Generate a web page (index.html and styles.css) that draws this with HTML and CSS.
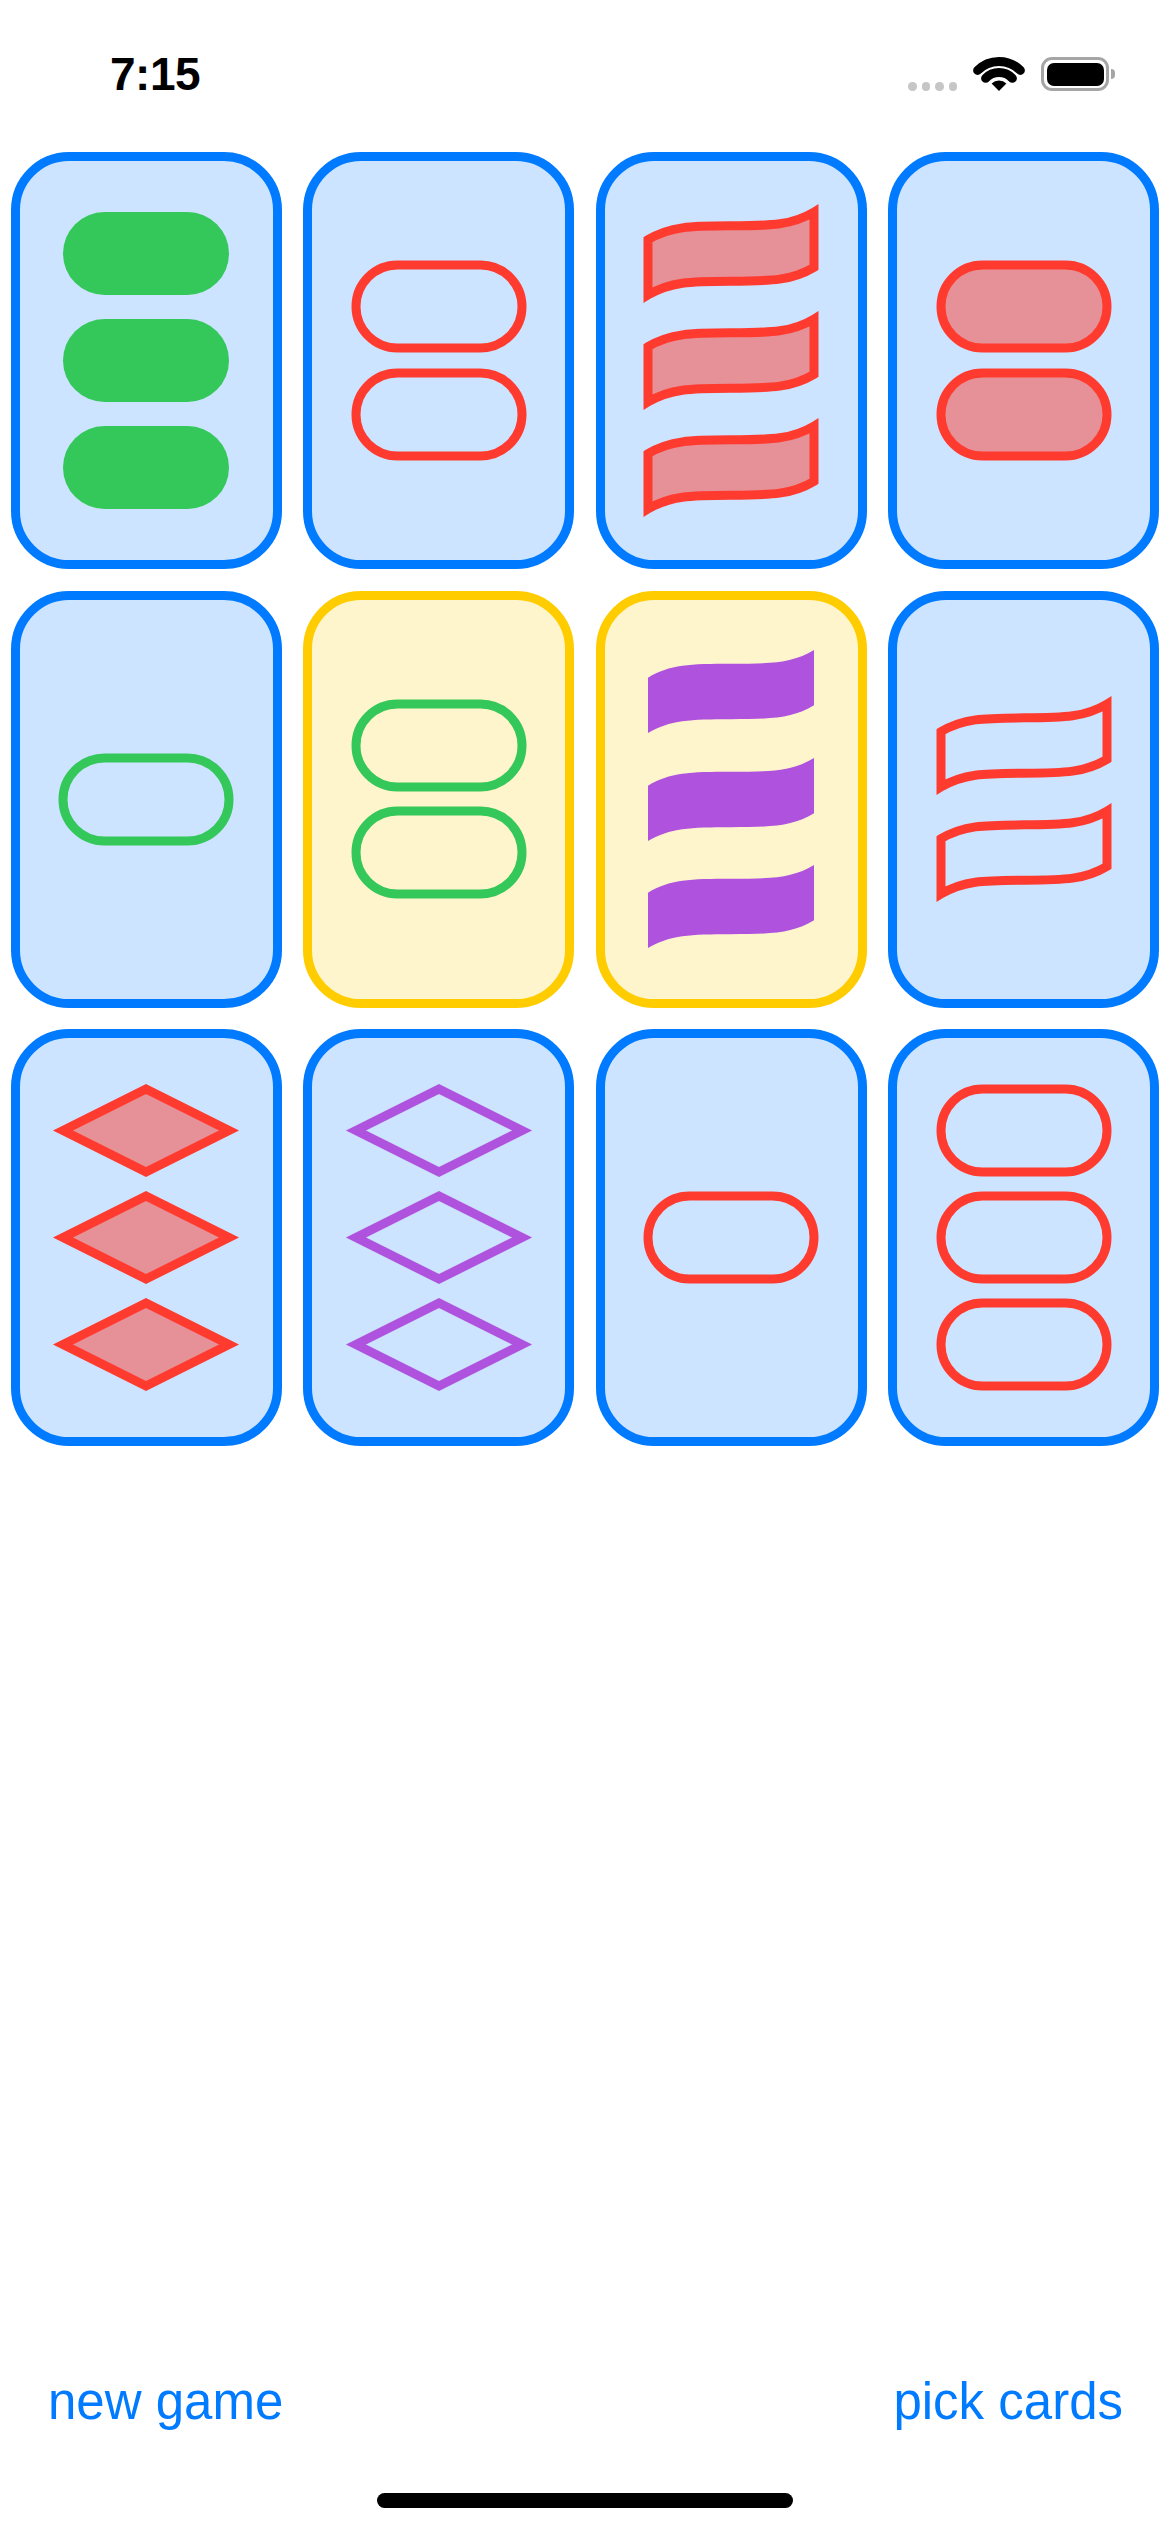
FILE: index.html
```html
<!DOCTYPE html>
<html lang="en">
<head>
<meta charset="utf-8">
<title>Set</title>
<link rel="stylesheet" href="styles.css">
</head>
<body>
<svg class="defs" width="0" height="0" aria-hidden="true">
  <defs>
    <rect id="capsule" x="0" y="0" width="166" height="83" rx="41.5" ry="41.5"/>
    <path id="squiggle" d="M0,27.7 C22,14.5 42,14 83,13.85 C124,13.7 144,13.2 166,0 L166,55.3 C144,68.5 124,69 83,69.15 C42,69.3 22,69.8 0,83 Z"/>
    <path id="diamond" d="M0,41.5 L83,0 L166,41.5 L83,83 Z"/>
  </defs>
</svg>
<div class="screen">
  <div class="status-bar">
    <span class="time">7:15</span>
    <div class="status-icons">
      <div class="signal"><i></i><i></i><i></i><i></i></div>
      <svg class="wifi" viewBox="0 0 50 34">
        <path d="M3.6,13.4 A30,30 0 0 1 46.4,13.4" fill="none" stroke="#000" stroke-width="9" stroke-linecap="round"/>
        <path d="M11.6,21.3 A18.5,18.5 0 0 1 38.4,21.3" fill="none" stroke="#000" stroke-width="9" stroke-linecap="round"/>
        <path d="M25,34 L17.6,26.6 A10.5,10.5 0 0 1 32.4,26.6 Z" fill="#000"/>
      </svg>
      <div class="battery"><div class="battery-body"><div class="battery-level"></div></div><div class="battery-nub"></div></div>
    </div>
  </div>

  <div class="grid">
    <div class="card blue">
      <svg class="shape green solid" viewBox="0 0 166 83"><use href="#capsule"/></svg>
      <svg class="shape green solid" viewBox="0 0 166 83"><use href="#capsule"/></svg>
      <svg class="shape green solid" viewBox="0 0 166 83"><use href="#capsule"/></svg>
    </div>
    <div class="card blue">
      <svg class="shape red outline" viewBox="0 0 166 83"><use href="#capsule"/></svg>
      <svg class="shape red outline" viewBox="0 0 166 83"><use href="#capsule"/></svg>
    </div>
    <div class="card blue">
      <svg class="shape red striped" viewBox="0 0 166 83"><use href="#squiggle"/></svg>
      <svg class="shape red striped" viewBox="0 0 166 83"><use href="#squiggle"/></svg>
      <svg class="shape red striped" viewBox="0 0 166 83"><use href="#squiggle"/></svg>
    </div>
    <div class="card blue">
      <svg class="shape red striped" viewBox="0 0 166 83"><use href="#capsule"/></svg>
      <svg class="shape red striped" viewBox="0 0 166 83"><use href="#capsule"/></svg>
    </div>

    <div class="card blue">
      <svg class="shape green outline" viewBox="0 0 166 83"><use href="#capsule"/></svg>
    </div>
    <div class="card yellow">
      <svg class="shape green outline" viewBox="0 0 166 83"><use href="#capsule"/></svg>
      <svg class="shape green outline" viewBox="0 0 166 83"><use href="#capsule"/></svg>
    </div>
    <div class="card yellow">
      <svg class="shape purple solid" viewBox="0 0 166 83"><use href="#squiggle"/></svg>
      <svg class="shape purple solid" viewBox="0 0 166 83"><use href="#squiggle"/></svg>
      <svg class="shape purple solid" viewBox="0 0 166 83"><use href="#squiggle"/></svg>
    </div>
    <div class="card blue">
      <svg class="shape red outline" viewBox="0 0 166 83"><use href="#squiggle"/></svg>
      <svg class="shape red outline" viewBox="0 0 166 83"><use href="#squiggle"/></svg>
    </div>

    <div class="card blue">
      <svg class="shape red striped" viewBox="0 0 166 83"><use href="#diamond"/></svg>
      <svg class="shape red striped" viewBox="0 0 166 83"><use href="#diamond"/></svg>
      <svg class="shape red striped" viewBox="0 0 166 83"><use href="#diamond"/></svg>
    </div>
    <div class="card blue">
      <svg class="shape purple outline" viewBox="0 0 166 83"><use href="#diamond"/></svg>
      <svg class="shape purple outline" viewBox="0 0 166 83"><use href="#diamond"/></svg>
      <svg class="shape purple outline" viewBox="0 0 166 83"><use href="#diamond"/></svg>
    </div>
    <div class="card blue">
      <svg class="shape red outline" viewBox="0 0 166 83"><use href="#capsule"/></svg>
    </div>
    <div class="card blue">
      <svg class="shape red outline" viewBox="0 0 166 83"><use href="#capsule"/></svg>
      <svg class="shape red outline" viewBox="0 0 166 83"><use href="#capsule"/></svg>
      <svg class="shape red outline" viewBox="0 0 166 83"><use href="#capsule"/></svg>
    </div>
  </div>

  <div class="spacer"></div>

  <div class="toolbar">
    <span class="toolbar-button">new game</span>
    <span class="toolbar-button">pick cards</span>
  </div>

  <div class="home-area"><div class="home-indicator"></div></div>
</div>
</body>
</html>
```

FILE: styles.css
```css
html, body {
  margin: 0;
  padding: 0;
  background: #ffffff;
}

.defs {
  position: absolute;
  width: 0;
  height: 0;
  overflow: hidden;
}

.screen {
  width: 1170px;
  height: 2532px;
  display: flex;
  flex-direction: column;
  font-family: "Liberation Sans", Arial, sans-serif;
  overflow: hidden;
}

/* Status bar */
.status-bar {
  height: 141px;
  box-sizing: border-box;
  padding: 51px 55px 0 110px;
  display: flex;
  justify-content: space-between;
  align-items: flex-start;
  flex-shrink: 0;
}

.time {
  font-size: 46px;
  line-height: 47px;
  font-weight: 700;
  letter-spacing: -0.5px;
  color: #000;
}

.status-icons {
  display: flex;
  align-items: flex-start;
  height: 47px;
}

.signal {
  display: flex;
  gap: 5px;
  margin-top: 31px;
}

.signal i {
  display: block;
  width: 8.5px;
  height: 9px;
  border-radius: 4.25px;
  background: #c6c6c6;
}

.wifi {
  width: 50px;
  height: 34px;
  margin-top: 6px;
  margin-left: 17px;
  overflow: visible;
}

.battery {
  display: flex;
  align-items: center;
  margin-top: 6px;
  margin-left: 17px;
}

.battery-body {
  width: 68px;
  height: 34px;
  box-sizing: border-box;
  border: 3px solid #a5a5a5;
  border-radius: 11px;
  padding: 2.5px;
}

.battery-level {
  width: 100%;
  height: 100%;
  background: #000;
  border-radius: 7px;
}

.battery-nub {
  width: 4px;
  height: 10px;
  margin-left: 2px;
  background: #a5a5a5;
  border-radius: 0 5px 5px 0;
}

/* Card grid */
.grid {
  padding: 11px;
  display: grid;
  grid-template-columns: repeat(4, 1fr);
  gap: 21.5px;
  flex-shrink: 0;
}

.card {
  height: 417px;
  box-sizing: border-box;
  border: 9px solid;
  border-radius: 58px;
  display: flex;
  flex-direction: column;
  align-items: center;
  justify-content: center;
  gap: 24.3px;
}

.card.blue {
  border-color: #007aff;
  background: rgba(0, 122, 255, 0.2);
}

.card.yellow {
  border-color: #ffcc00;
  background: rgba(255, 204, 0, 0.2);
}

.shape {
  display: block;
  width: 166px;
  height: 83px;
  overflow: visible;
  flex-shrink: 0;
}

.green { color: #34c759; }
.red { color: #ff3b30; }
.purple { color: #af52de; }

.solid {
  fill: currentColor;
  stroke: none;
}

.striped {
  fill: currentColor;
  fill-opacity: 0.5;
  stroke: currentColor;
  stroke-width: 9;
  stroke-linejoin: miter;
  stroke-miterlimit: 10;
}

.outline {
  fill: none;
  stroke: currentColor;
  stroke-width: 9;
  stroke-linejoin: miter;
  stroke-miterlimit: 10;
}

.spacer {
  flex: 1;
}

/* Bottom toolbar */
.toolbar {
  height: 60px;
  box-sizing: border-box;
  padding: 0 47px 0 48px;
  display: flex;
  justify-content: space-between;
  align-items: flex-start;
  flex-shrink: 0;
}

.toolbar-button {
  font-size: 51px;
  line-height: 60px;
  color: #007aff;
}

.home-area {
  height: 100px;
  display: flex;
  justify-content: center;
  flex-shrink: 0;
}

.home-indicator {
  width: 416px;
  height: 15px;
  margin-top: 61px;
  border-radius: 7.5px;
  background: #000;
}
```
